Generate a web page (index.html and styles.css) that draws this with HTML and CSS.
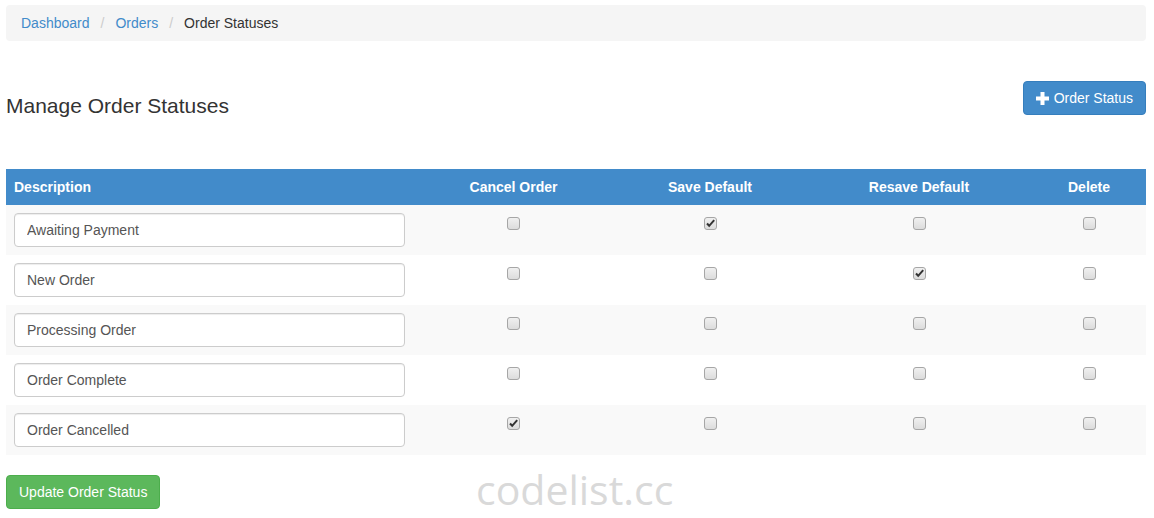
FILE: index.html
```html
<!DOCTYPE html>
<html>
<head>
<meta charset="utf-8">
<title>Manage Order Statuses</title>
<link rel="stylesheet" href="styles.css">
</head>
<body>
<div class="page">
  <ol class="breadcrumb">
    <li><a href="#">Dashboard</a></li>
    <li class="sep">/</li>
    <li><a href="#">Orders</a></li>
    <li class="sep">/</li>
    <li class="active">Order Statuses</li>
  </ol>

  <div class="header-row">
    <h3 class="title">Manage Order Statuses</h3>
    <button class="btn btn-primary" type="button">
      <svg class="plus" width="13" height="13" viewBox="0 0 13 13"><path d="M4.5 0h4v4.5H13v4H8.5V13h-4V8.5H0v-4h4.5z" fill="#fff"/></svg>
      Order Status
    </button>
  </div>

  <table class="table">
    <colgroup>
      <col class="c-desc"><col class="c-cancel"><col class="c-save"><col class="c-resave"><col class="c-delete">
    </colgroup>
    <thead>
      <tr>
        <th class="left">Description</th>
        <th>Cancel Order</th>
        <th>Save Default</th>
        <th>Resave Default</th>
        <th>Delete</th>
      </tr>
    </thead>
    <tbody>
      <tr>
        <td><input class="form-control" type="text" value="Awaiting Payment"></td>
        <td><input type="checkbox"></td>
        <td><input type="checkbox" checked></td>
        <td><input type="checkbox"></td>
        <td><input type="checkbox"></td>
      </tr>
      <tr>
        <td><input class="form-control" type="text" value="New Order"></td>
        <td><input type="checkbox"></td>
        <td><input type="checkbox"></td>
        <td><input type="checkbox" checked></td>
        <td><input type="checkbox"></td>
      </tr>
      <tr>
        <td><input class="form-control" type="text" value="Processing Order"></td>
        <td><input type="checkbox"></td>
        <td><input type="checkbox"></td>
        <td><input type="checkbox"></td>
        <td><input type="checkbox"></td>
      </tr>
      <tr>
        <td><input class="form-control" type="text" value="Order Complete"></td>
        <td><input type="checkbox"></td>
        <td><input type="checkbox"></td>
        <td><input type="checkbox"></td>
        <td><input type="checkbox"></td>
      </tr>
      <tr>
        <td><input class="form-control" type="text" value="Order Cancelled"></td>
        <td><input type="checkbox" checked></td>
        <td><input type="checkbox"></td>
        <td><input type="checkbox"></td>
        <td><input type="checkbox"></td>
      </tr>
    </tbody>
  </table>

  <div class="footer-row">
    <button class="btn btn-success" type="button">Update Order Status</button>
  </div>

  <div class="watermark">codelist.cc</div>
</div>
</body>
</html>
```
FILE: styles.css
```css
* { box-sizing: border-box; }

html, body {
  margin: 0;
  padding: 0;
  background: #fff;
}

body {
  font-family: "Liberation Sans", Arial, Helvetica, sans-serif;
  font-size: 14px;
  line-height: 1.42857;
  color: #333;
}

.page {
  position: relative;
  padding: 5px 8px 0 6px;
  width: 1154px;
  height: 518px;
}

.breadcrumb {
  list-style: none;
  margin: 0;
  width: 1140px;
  height: 36px;
  padding: 9px 15px 7px;
  background: #f5f5f5;
  border-radius: 4px;
  display: flex;
  align-items: center;
}

.breadcrumb li { display: block; }

.breadcrumb a {
  color: #428bca;
  text-decoration: none;
}

.breadcrumb .sep {
  color: #ccc;
  padding: 0 11px;
}

.breadcrumb .active { color: #333; }

.header-row {
  display: flex;
  justify-content: space-between;
  align-items: flex-start;
  width: 1140px;
  margin-top: 40px;
  height: 88px;
}

.title {
  margin: 13px 0 0 0;
  font-size: 21px;
  line-height: 24px;
  font-weight: normal;
  color: #333;
}

.btn {
  font-family: "Liberation Sans", Arial, Helvetica, sans-serif;
  font-size: 14px;
  line-height: 20px;
  padding: 6px 12px;
  border-radius: 4px;
  border: 1px solid transparent;
  color: #fff;
  cursor: pointer;
  display: inline-flex;
  align-items: center;
}

.btn-primary {
  background: #428bca;
  border-color: #357ebd;
  height: 34px;
  padding: 6px 12px;
}

.plus { margin-right: 5px; }

.btn-success {
  background: #5cb85c;
  border-color: #4cae4c;
  height: 34px;
}

.table {
  width: 1140px;
  border-collapse: collapse;
  table-layout: fixed;
}

.c-desc { width: 407px; }
.c-cancel { width: 201px; }
.c-save { width: 192px; }
.c-resave { width: 226px; }
.c-delete { width: 114px; }

.table th {
  background: #428bca;
  color: #fff;
  font-weight: bold;
  text-align: center;
  height: 36px;
  padding: 9px 8px 7px;
  vertical-align: middle;
}

.table th.left { text-align: left; }

.table td {
  height: 50px;
  padding: 8px;
  text-align: center;
  vertical-align: top;
}

.table tbody tr:nth-child(odd) td { background: #f9f9f9; }

.form-control {
  display: block;
  width: 100%;
  height: 34px;
  padding: 6px 12px;
  font-family: "Liberation Sans", Arial, Helvetica, sans-serif;
  font-size: 14px;
  color: #555;
  background: #fff;
  border: 1px solid #ccc;
  border-radius: 4px;
  box-shadow: inset 0 1px 1px rgba(0,0,0,0.075);
}

input[type="checkbox"] {
  -webkit-appearance: none;
  appearance: none;
  width: 13px;
  height: 13px;
  margin: 4px 0 0 0;
  border: 1px solid #a6a6a6;
  border-radius: 3px;
  background: linear-gradient(#f0f0f0, #dcdcdc);
  vertical-align: top;
}

input[type="checkbox"]:checked {
  background-image: url("data:image/svg+xml,%3Csvg xmlns='http://www.w3.org/2000/svg' width='11' height='11' viewBox='0 0 11 11'%3E%3Cpath d='M2 5.5l2.2 2.3L9.2 2.2' fill='none' stroke='%23333' stroke-width='2'/%3E%3C/svg%3E"), linear-gradient(#f0f0f0, #dcdcdc);
  background-repeat: no-repeat;
  background-position: center;
}

.footer-row {
  margin-top: 20px;
  display: flex;
}

.watermark {
  position: absolute;
  left: 476px;
  top: 462px;
  font-family: "Open Sans", sans-serif;
  font-size: 41px;
  line-height: 54px;
  color: #d9d9d9;
  pointer-events: none;
}
```
